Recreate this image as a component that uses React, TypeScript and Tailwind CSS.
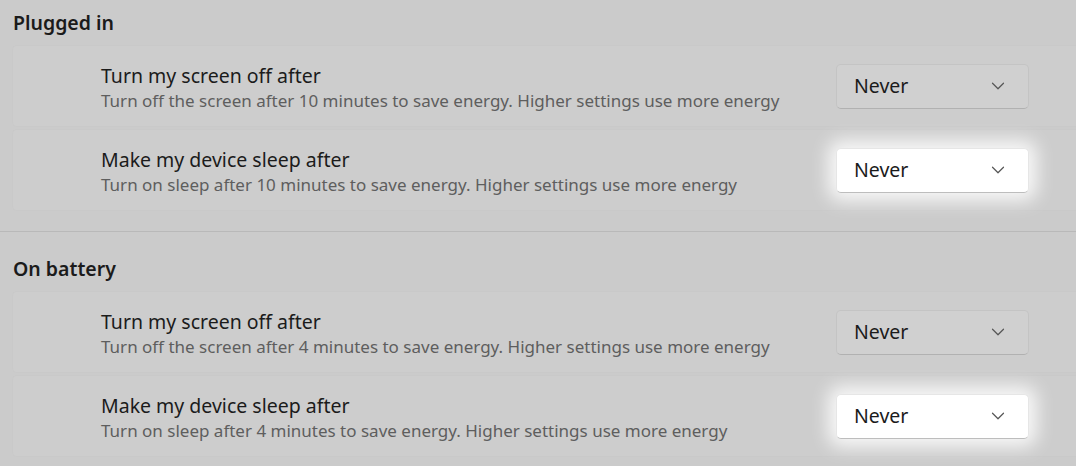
import { ChevronDown } from 'lucide-react';

type Row = {
  title: string;
  desc: string;
  value: string;
  glow?: boolean;
};

const sections: { heading: string; rows: Row[] }[] = [
  {
    heading: 'Plugged in',
    rows: [
      {
        title: 'Turn my screen off after',
        desc: 'Turn off the screen after 10 minutes to save energy. Higher settings use more energy',
        value: 'Never',
      },
      {
        title: 'Make my device sleep after',
        desc: 'Turn on sleep after 10 minutes to save energy. Higher settings use more energy',
        value: 'Never',
        glow: true,
      },
    ],
  },
  {
    heading: 'On battery',
    rows: [
      {
        title: 'Turn my screen off after',
        desc: 'Turn off the screen after 4 minutes to save energy. Higher settings use more energy',
        value: 'Never',
      },
      {
        title: 'Make my device sleep after',
        desc: 'Turn on sleep after 4 minutes to save energy. Higher settings use more energy',
        value: 'Never',
        glow: true,
      },
    ],
  },
];

const Dropdown = ({ value, glow }: { value: string; glow?: boolean }) => (
  <button
    className={`w-[193px] h-[45px] flex items-center justify-between pl-[17px] pr-[19px] rounded-[5px] border ${
      glow
        ? 'bg-white border-[#e6e6e6] border-b-[#bdbdbd] shadow-[0_0_18px_8px_rgba(255,255,255,0.85)]'
        : 'bg-[#d0d0d0] border-[#c4c4c4] border-b-[#b1b1b1]'
    }`}
  >
    <span className="text-[19.5px] text-[#1b1b1b]">{value}</span>
    <ChevronDown className="w-[22px] h-[22px] text-[#555555]" strokeWidth={1.3} />
  </button>
);

export default function App() {
  return (
    <div
      className="w-[1076px] h-[466px] overflow-hidden bg-[#cbcbcb]"
      style={{ fontFamily: '"Noto Sans", "Open Sans", sans-serif' }}
    >
      {sections.map((section, si) => (
        <div
          key={si}
          className={si > 0 ? 'border-t border-[#b9b9b9] pt-[21px]' : 'pt-[7px]'}
        >
          <h2 className="pl-[13px] text-[19.5px] font-semibold text-[#1b1b1b] h-[32px] leading-[32px] mb-[6px]">
            {section.heading}
          </h2>
          <div className="flex flex-col gap-[2px] pl-[12px]">
            {section.rows.map((row, ri) => (
              <div
                key={ri}
                className="h-[82px] flex items-center justify-between pl-[88px] pr-[47px] bg-[#cdcdcd] rounded-l-[5px] border border-r-0 border-[#c9c9c9]"
              >
                <div className="flex flex-col pt-[2px]">
                  <span className="text-[19.5px] leading-[26px] text-[#1b1b1b]">{row.title}</span>
                  <span className="text-[17px] leading-[23px] text-[#5e5e5e]">{row.desc}</span>
                </div>
                <Dropdown value={row.value} glow={row.glow} />
              </div>
            ))}
          </div>
          {si === 0 && <div className="h-[20px]" />}
        </div>
      ))}
    </div>
  );
}
